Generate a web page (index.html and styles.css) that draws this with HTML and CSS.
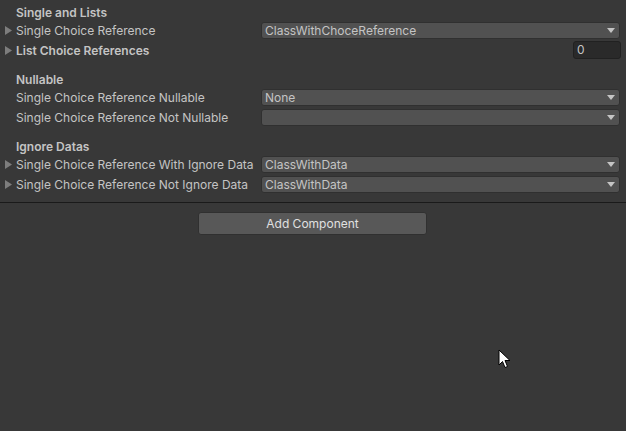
FILE: index.html
```html
<!DOCTYPE html>
<html>
<head>
<meta charset="utf-8">
<link rel="stylesheet" href="styles.css">
</head>
<body>
<div class="inspector">
  <div class="section">
    <div class="header">Single and Lists</div>
    <div class="row">
      <span class="fold"><svg width="8" height="9" viewBox="0 0 8 9"><polygon points="0,0 7,4.5 0,9"/></svg></span>
      <span class="label">Single Choice Reference</span>
      <div class="dropdown"><span>ClassWithChoceReference</span><svg class="caret" width="8" height="5" viewBox="0 0 8 5"><polygon points="0,0 8,0 4,5"/></svg></div>
    </div>
    <div class="row">
      <span class="fold"><svg width="8" height="9" viewBox="0 0 8 9"><polygon points="0,0 7,4.5 0,9"/></svg></span>
      <span class="label bold">List Choice References</span>
      <div class="spacer"></div>
      <div class="intfield">0</div>
    </div>
  </div>
  <div class="section">
    <div class="header">Nullable</div>
    <div class="row">
      <span class="fold"></span>
      <span class="label">Single Choice Reference Nullable</span>
      <div class="dropdown"><span>None</span><svg class="caret" width="8" height="5" viewBox="0 0 8 5"><polygon points="0,0 8,0 4,5"/></svg></div>
    </div>
    <div class="row">
      <span class="fold"></span>
      <span class="label">Single Choice Reference Not Nullable</span>
      <div class="dropdown"><span></span><svg class="caret" width="8" height="5" viewBox="0 0 8 5"><polygon points="0,0 8,0 4,5"/></svg></div>
    </div>
  </div>
  <div class="section">
    <div class="header">Ignore Datas</div>
    <div class="row">
      <span class="fold"><svg width="8" height="9" viewBox="0 0 8 9"><polygon points="0,0 7,4.5 0,9"/></svg></span>
      <span class="label">Single Choice Reference With Ignore Data</span>
      <div class="dropdown"><span>ClassWithData</span><svg class="caret" width="8" height="5" viewBox="0 0 8 5"><polygon points="0,0 8,0 4,5"/></svg></div>
    </div>
    <div class="row">
      <span class="fold"><svg width="8" height="9" viewBox="0 0 8 9"><polygon points="0,0 7,4.5 0,9"/></svg></span>
      <span class="label">Single Choice Reference Not Ignore Data</span>
      <div class="dropdown"><span>ClassWithData</span><svg class="caret" width="8" height="5" viewBox="0 0 8 5"><polygon points="0,0 8,0 4,5"/></svg></div>
    </div>
  </div>
</div>
<div class="separator"></div>
<div class="actions">
  <button class="add-btn">Add Component</button>
</div>
<svg class="cursor" width="14" height="20" viewBox="0 0 14 20">
  <polygon points="1,1 1,16 4.5,12.5 7,18.5 9.5,17.5 7,11.5 12,11.5" fill="#ffffff" stroke="#000000" stroke-width="1" stroke-linejoin="miter"/>
</svg>
</body>
</html>
```

FILE: styles.css
```css
html, body {
  margin: 0;
  padding: 0;
  background: #383838;
  width: 626px;
  height: 431px;
  overflow: hidden;
  position: relative;
}
body {
  font-family: Inter, "Noto Sans", "Liberation Sans", sans-serif;
  font-size: 12px;
  color: #c4c4c4;
}
.inspector {
  padding: 4px 6px 0 0;
}
.section + .section {
  margin-top: 9px;
}
.header {
  height: 18px;
  line-height: 18px;
  padding-left: 16px;
  font-weight: 600;
}
.row {
  display: flex;
  height: 20px;
  align-items: flex-start;
}
.fold {
  width: 16px;
  height: 17px;
  display: flex;
  align-items: center;
  padding-left: 5px;
  box-sizing: border-box;
}
.fold svg {
  fill: #7d7d7d;
}
.label {
  width: 245px;
  line-height: 17px;
  white-space: nowrap;
}
.label.bold {
  font-weight: 600;
}
.spacer {
  flex: 1;
}
.dropdown {
  flex: 1;
  height: 17px;
  box-sizing: border-box;
  background: #515151;
  border: 1px solid #303030;
  border-radius: 3px;
  display: flex;
  align-items: center;
  justify-content: space-between;
  padding: 0 4px 0 3px;
  line-height: 15px;
}
.caret {
  fill: #c4c4c4;
}
.intfield {
  width: 48px;
  height: 18px;
  margin-top: -1px;
  margin-right: -1px;
  box-sizing: border-box;
  background: #2a2a2a;
  border: 1px solid #212121;
  border-radius: 3px;
  padding-left: 3px;
  line-height: 16px;
}
.separator {
  margin-top: 6px;
  height: 1px;
  background: #1a1a1a;
}
.actions {
  display: flex;
  justify-content: center;
  padding-top: 9px;
}
.add-btn {
  width: 229px;
  height: 23px;
  margin-left: -1px;
  background: #585858;
  border: 1px solid #303030;
  border-radius: 3px;
  color: #e0e0e0;
  font-family: Inter, "Noto Sans", "Liberation Sans", sans-serif;
  font-size: 12px;
  padding: 0;
}
.cursor {
  position: absolute;
  left: 498px;
  top: 349px;
}
```
